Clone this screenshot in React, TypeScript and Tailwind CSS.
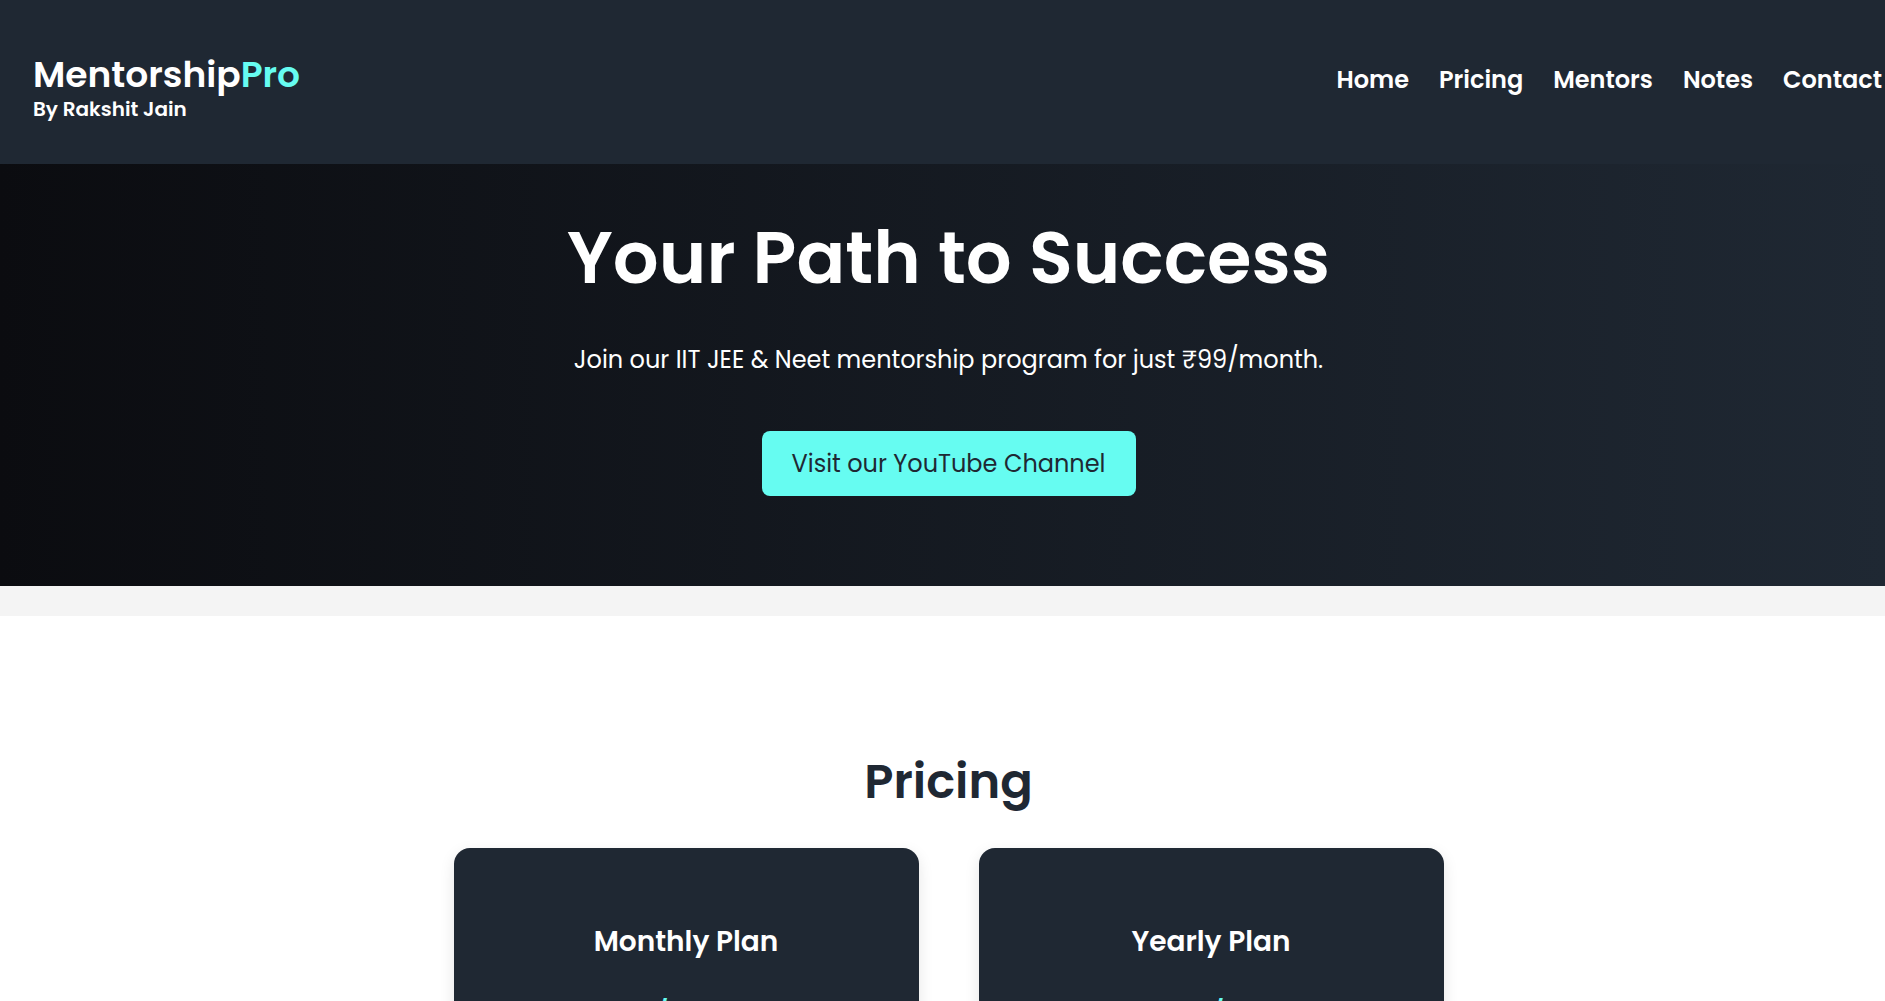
const links = ["Home", "Pricing", "Mentors", "Notes", "Contact"];

const plans = [
  { name: "Monthly Plan", price: "₹99/month" },
  { name: "Yearly Plan", price: "₹999/year" },
];

function Header() {
  return (
    <header className="flex items-start justify-between bg-[#1f2833] pt-[55px] pr-[3px] pb-10 pl-[33px] font-semibold text-white">
      <div>
        <div className="text-4xl leading-[39px]">
          Mentorship<span className="text-[#66fcf1]">Pro</span>
        </div>
        <p className="text-xl leading-[30px]">By Rakshit Jain</p>
      </div>
      <nav className="mt-[7px]">
        <ul className="flex gap-[30px] text-2xl leading-9">
          {links.map((label) => (
            <li key={label}>
              <a href={`#${label.toLowerCase()}`}>{label}</a>
            </li>
          ))}
        </ul>
      </nav>
    </header>
  );
}

function Hero() {
  return (
    <section
      id="home"
      className="flex flex-col items-center bg-linear-to-r/srgb from-[#0b0c10] to-[#1f2833] pt-10 pb-[90px] pl-3 text-center text-white"
    >
      <h1 className="text-7xl leading-[108px] font-semibold">Your Path to Success</h1>
      <p className="mt-[30px] text-2xl leading-9">
        Join our IIT JEE &amp; Neet mentorship program for just ₹99/month.
      </p>
      <a
        href="#youtube"
        className="mt-[53px] rounded-lg bg-[#66fcf1] px-[30px] pt-[15px] pb-3.5 text-2xl leading-9 text-[#1f2833]"
      >
        Visit our YouTube Channel
      </a>
    </section>
  );
}

function Pricing() {
  return (
    <section id="pricing" className="mt-[30px] bg-white pt-[130px] pb-32 pl-3 text-center">
      <h2 className="text-5xl leading-[72px] font-semibold text-[#1f2833]">Pricing</h2>
      <div className="mt-[30px] flex justify-center gap-[60px]">
        {plans.map((plan) => (
          <article
            key={plan.name}
            className="w-[465px] rounded-2xl bg-[#1f2833] px-10 py-[73px] shadow-[0_5px_15px_rgba(0,0,0,0.1)]"
          >
            <h3 className="text-[28px] leading-[42px] font-semibold text-white">{plan.name}</h3>
            <p className="mt-[30px] text-4xl leading-[54px] text-[#66fcf1]">{plan.price}</p>
          </article>
        ))}
      </div>
    </section>
  );
}

export default function App() {
  return (
    <div className="h-screen overflow-hidden bg-[#f4f4f4] font-['Poppins',sans-serif]">
      <Header />
      <main>
        <Hero />
        <Pricing />
      </main>
    </div>
  );
}
